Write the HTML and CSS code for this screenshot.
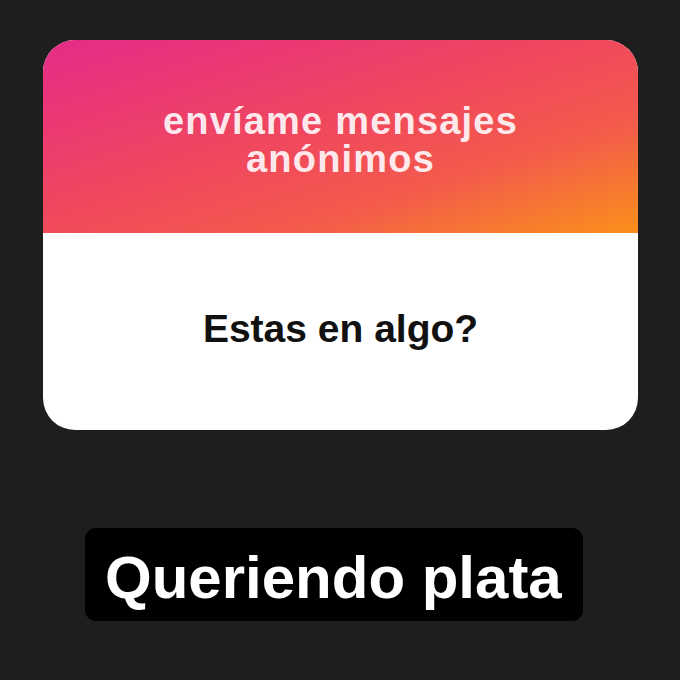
FILE: index.html
```html
<!DOCTYPE html>
<html lang="es">
<head>
  <meta charset="UTF-8" />
  <meta name="viewport" content="width=device-width, initial-scale=1.0"/>
  <title>Mensajes anónimos</title>
  <link rel="stylesheet" href="styles.css">
</head>
<body>
  <div class="question-card">
    <div class="card-header">
      <p>envíame mensajes<br>anónimos</p>
    </div>
    <div class="card-body">
      <p>Estas en algo?</p>
    </div>
  </div>

  <div class="caption">Queriendo plata</div>
</body>
</html>
```

FILE: styles.css
```css
* { margin: 0; padding: 0; box-sizing: border-box; }

body {
  font-family: 'Liberation Sans', Arial, sans-serif;
  background-color: #1e1e1e;
  width: 680px;
  height: 680px;
  padding: 40px 0 0 43px;
  overflow: hidden;
}

.question-card {
  width: 595px;
  border-radius: 32px;
  overflow: hidden;
  background-color: #ffffff;
}

.card-header {
  height: 193px;
  padding-top: 62px;
  background: linear-gradient(to bottom right, #e52b88 0%, #f0475e 45%, #f35a4c 70%, #fb901b 100%);
  text-align: center;
}

.card-header p {
  font-size: 38px;
  line-height: 38px;
  font-weight: bold;
  letter-spacing: 1.2px;
  color: rgba(255, 243, 246, 0.95);
}

.card-body {
  height: 197px;
  padding-top: 73px;
  text-align: center;
}

.card-body p {
  font-size: 39px;
  line-height: 46px;
  font-weight: bold;
  color: #111111;
}

.caption {
  display: inline-block;
  margin: 98px 0 0 42px;
  padding: 20px 21px 13px 20px;
  background-color: #000000;
  border-radius: 11px;
  color: #ffffff;
  font-size: 60px;
  line-height: 60px;
  font-weight: bold;
  white-space: nowrap;
}
```
